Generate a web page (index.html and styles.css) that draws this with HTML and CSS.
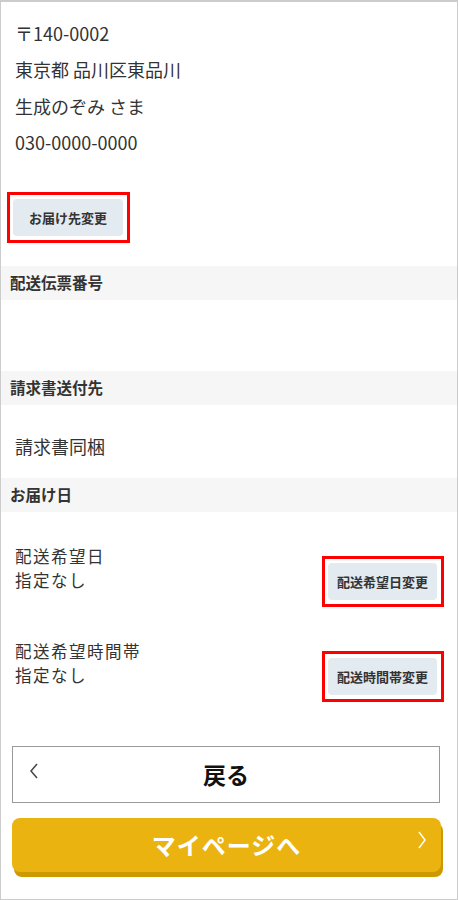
FILE: index.html
```html
<!DOCTYPE html>
<html lang="ja">
<head>
    <meta charset="UTF-8">
    <meta name="viewport" content="width=device-width, initial-scale=1.0">
    <title>お届け先確認</title>
    <link rel="stylesheet" href="styles.css">
</head>
<body>
    <div class="page">
        <div class="address">
            <p>〒140-0002</p>
            <p>東京都 品川区東品川</p>
            <p>生成のぞみ さま</p>
            <p>030-0000-0000</p>
        </div>
        <div class="change-wrap">
            <span class="mark"><button class="change-btn">お届け先変更</button></span>
        </div>

        <h2 class="section-title">配送伝票番号</h2>
        <div class="empty-block"></div>

        <h2 class="section-title">請求書送付先</h2>
        <p class="invoice">請求書同梱</p>

        <h2 class="section-title">お届け日</h2>
        <div class="delivery-row">
            <div class="delivery-text">
                <p>配送希望日</p>
                <p>指定なし</p>
            </div>
            <span class="mark"><button class="change-btn">配送希望日変更</button></span>
        </div>
        <div class="delivery-row">
            <div class="delivery-text">
                <p>配送希望時間帯</p>
                <p>指定なし</p>
            </div>
            <span class="mark"><button class="change-btn">配送時間帯変更</button></span>
        </div>

        <div class="actions">
            <button class="back-btn">
                <svg class="chev left" width="10" height="16" viewBox="0 0 10 16"><polyline points="8,1 2,8 8,15" fill="none" stroke="#444" stroke-width="1.5"/></svg>
                戻る
            </button>
            <button class="mypage-btn">
                マイページへ
                <svg class="chev right" width="10" height="18" viewBox="0 0 10 18"><polyline points="2,1 8,9 2,17" fill="none" stroke="#fff" stroke-width="1.5"/></svg>
            </button>
        </div>
    </div>
</body>
</html>
```

FILE: styles.css
```css
body {
    margin: 0;
    font-family: "Noto Sans CJK JP", "Noto Sans", sans-serif;
    color: #333;
    background-color: #fff;
}
p {
    margin: 0;
}
.page {
    box-sizing: border-box;
    width: 458px;
    height: 900px;
    border: 1px solid #ccc;
    border-top-width: 2px;
}
.address {
    padding: 13px 0 0 14px;
    font-size: 18px;
    line-height: 36.4px;
}
.change-wrap {
    padding: 31px 0 0 6px;
    height: 74px;
}
.mark {
    display: inline-block;
    border: 3px solid #f00;
    padding: 4px 4px 4px 3px;
}
.change-btn {
    display: block;
    font-family: inherit;
    font-size: 13px;
    font-weight: bold;
    color: #333;
    background-color: #e3eaf0;
    border: none;
    border-radius: 4px;
    height: 37px;
    padding: 0 16px;
    cursor: pointer;
}
.section-title {
    margin: 0;
    height: 34px;
    line-height: 33px;
    padding-left: 9px;
    background-color: #f6f6f6;
    font-size: 15.5px;
    font-weight: bold;
    color: #333;
}
.empty-block {
    height: 71px;
}
.invoice {
    height: 73px;
    line-height: 82px;
    padding-left: 14px;
    font-size: 18px;
}
.delivery-row {
    display: flex;
    justify-content: space-between;
    align-items: flex-start;
    padding: 0 13px 0 14px;
    margin-top: 32px;
}
.delivery-text {
    font-size: 16.5px;
    letter-spacing: 1.5px;
    line-height: 24px;
}
.delivery-row .mark {
    margin-top: 12px;
}
.delivery-row .change-btn {
    padding: 0 9px;
}
.actions {
    padding: 44px 0 0 11px;
}
.back-btn {
    position: relative;
    display: block;
    box-sizing: border-box;
    width: 428px;
    height: 57px;
    border: 1px solid #999;
    background-color: #fff;
    font-family: inherit;
    font-size: 23px;
    font-weight: bold;
    color: #111;
    cursor: pointer;
}
.mypage-btn {
    position: relative;
    display: block;
    width: 429px;
    height: 54px;
    margin-top: 15px;
    border: none;
    border-radius: 8px;
    background-color: #eab30f;
    box-shadow: 2px 5px 0 #cc9a00;
    font-family: inherit;
    font-size: 24px;
    font-weight: bold;
    color: #fff;
    letter-spacing: 1px;
    cursor: pointer;
}
.chev {
    position: absolute;
}
.chev.left {
    left: 16px;
    top: 16px;
}
.chev.right {
    right: 14px;
    top: 13px;
}
```
